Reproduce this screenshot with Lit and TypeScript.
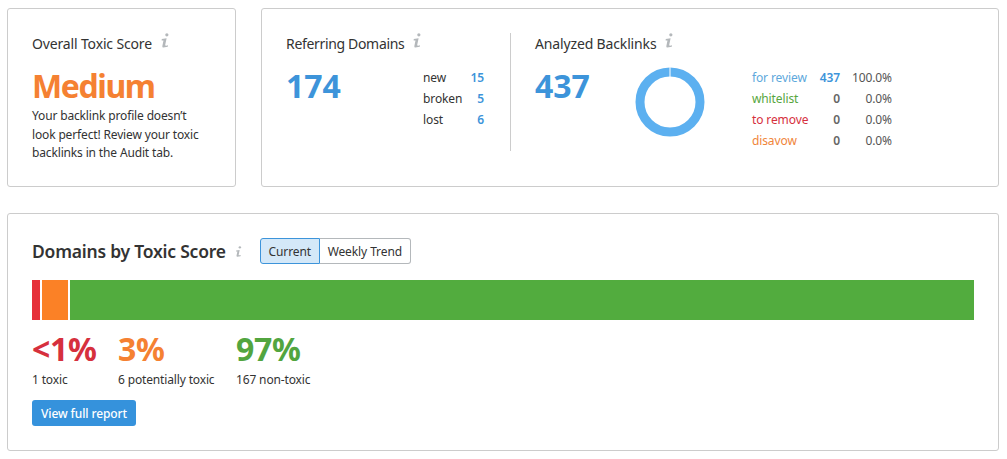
import { LitElement, html, css, svg } from 'lit';
import { customElement } from 'lit/decorators.js';

const info = (size: number) => html`
  <svg class="info" width=${size} height=${Math.round(size * 1.25)} viewBox="0 0 10 13" aria-hidden="true">
    ${svg`<circle cx="6.6" cy="1.6" r="1.4" fill="#b4b8bb"></circle>
    <path d="M2.2 5.2 L6.4 4.6 L5.2 10.2 Q5.1 11.1 6 11 L7.6 10.6 L7.4 12 L3.6 12.6 Q2.4 12.6 2.7 11.2 L3.7 6.6 L2.1 6.6 Z" fill="#b4b8bb"></path>`}
  </svg>`;

const legend = [
  { label: 'for review', cls: 'review', count: '437', pct: '100.0%', active: true },
  { label: 'whitelist', cls: 'white', count: '0', pct: '0.0%', active: false },
  { label: 'to remove', cls: 'remove', count: '0', pct: '0.0%', active: false },
  { label: 'disavow', cls: 'disavow', count: '0', pct: '0.0%', active: false },
];

const domains = [
  { label: 'new', value: '15' },
  { label: 'broken', value: '5' },
  { label: 'lost', value: '6' },
];

const stats = [
  { pct: '<1%', note: '1 toxic', cls: 'red', width: 86 },
  { pct: '3%', note: '6 potentially toxic', cls: 'orange', width: 118 },
  { pct: '97%', note: '167 non-toxic', cls: 'green', width: 100 },
];

@customElement('app-root')
export class AppRoot extends LitElement {
  static styles = css`
    :host {
      display: block;
      box-sizing: border-box;
      width: 1007px;
      height: 459px;
      padding: 8px 8px 0 7px;
      background: #fff;
      color: #333;
      font-family: 'Noto Sans', 'Open Sans', sans-serif;
      font-size: 12px;
      overflow: hidden;
    }

    .top {
      display: flex;
      gap: 25px;
      margin-bottom: 26px;
    }

    .card {
      box-sizing: border-box;
      background: #fff;
      border: 1px solid #ccc;
      border-radius: 3px;
    }

    .score {
      width: 229px;
      height: 179px;
      padding: 24px 24px 0;
    }

    .links {
      display: flex;
      width: 738px;
      height: 179px;
      padding: 24px 0 0 24px;
    }

    .title {
      display: flex;
      align-items: flex-start;
      gap: 7px;
      height: 22px;
      font-size: 14px;
      line-height: 22px;
      letter-spacing: -0.15px;
      white-space: nowrap;
    }

    .info {
      display: block;
    }

    .medium {
      margin-top: 9px;
      color: #f58132;
      font-size: 32px;
      font-weight: 700;
      line-height: 43px;
      letter-spacing: -1.4px;
    }

    .desc {
      margin: 0;
      font-size: 12px;
      line-height: 18.5px;
      letter-spacing: -0.15px;
      white-space: nowrap;
    }

    .referring {
      width: 224px;
      height: 118px;
      border-right: 1px solid #ccc;
      box-sizing: content-box;
    }

    .referring .title {
      letter-spacing: -0.33px;
    }

    .analyzed {
      flex: 1;
      padding-left: 24px;
    }

    .body {
      display: flex;
      margin-top: 9px;
    }

    .big {
      color: #3d94da;
      font-size: 32px;
      font-weight: 700;
      line-height: 43px;
    }

    .referring .big {
      width: 137px;
    }

    .domains {
      display: grid;
      grid-template-columns: 46px 15px;
      justify-content: start;
      margin-top: 3px;
      line-height: 21px;
      letter-spacing: -0.1px;
    }

    .domains b,
    .legend b {
      text-align: right;
      font-weight: 600;
    }

    .domains b {
      color: #3d94da;
    }

    .donut {
      display: block;
      margin: 3px 0 0 45px;
    }

    .legend {
      display: grid;
      grid-template-columns: 66px 22px 52px;
      margin: 3px 0 0 47px;
      line-height: 21px;
      letter-spacing: -0.1px;
      height: 84px;
    }

    .legend b {
      color: #666;
    }

    .legend b.on {
      color: #3d94da;
    }

    .legend span.pct {
      text-align: right;
      color: #555;
    }

    .review { color: #5da8dc; }
    .white { color: #57a63e; }
    .remove { color: #d6303d; }
    .disavow { color: #f0853a; }

    .toxic {
      height: 238px;
      padding: 24px 24px 0;
    }

    .head {
      display: flex;
      align-items: center;
      height: 26px;
    }

    .head h2 {
      margin: 0;
      font-size: 17.5px;
      font-weight: 600;
      line-height: 26px;
      letter-spacing: -0.22px;
      white-space: nowrap;
    }

    .head .info {
      margin-left: 8px;
    }

    .switch {
      display: flex;
      margin-left: 17px;
      height: 26px;
      font-size: 12px;
      letter-spacing: -0.1px;
    }

    .switch button {
      box-sizing: border-box;
      height: 26px;
      padding: 0;
      border: 1px solid #b4b8bb;
      background: #fff;
      color: #333;
      font: inherit;
      letter-spacing: inherit;
    }

    .switch .on {
      width: 60px;
      background: #d4e8f8;
      border-color: #3d94da;
      border-radius: 3px 0 0 3px;
    }

    .switch .off {
      width: 91px;
      border-left: 0;
      border-radius: 0 3px 3px 0;
    }

    .bar {
      display: flex;
      gap: 2px;
      height: 40px;
      width: 942px;
      margin-top: 16px;
    }

    .bar div:nth-child(1) { width: 8px; background: #e6303a; }
    .bar div:nth-child(2) { width: 26px; background: #fb8126; }
    .bar div:nth-child(3) { flex: 1; background: #52ac3e; }

    .stats {
      display: flex;
      margin-top: 9px;
    }

    .stat .pct {
      font-size: 32px;
      font-weight: 700;
      line-height: 40px;
      letter-spacing: -0.3px;
    }

    .stat .note {
      margin-top: 2px;
      line-height: 18px;
      letter-spacing: -0.15px;
      white-space: nowrap;
    }

    .red { color: #d6303d; }
    .orange { color: #f58132; }
    .green { color: #52a53f; }

    .report {
      display: block;
      width: 104px;
      height: 26px;
      margin-top: 11px;
      padding: 0;
      border: 0;
      border-radius: 3px;
      background: #3592dc;
      color: #fff;
      font: inherit;
      font-weight: 500;
      letter-spacing: -0.1px;
    }
  `;

  render() {
    return html`
      <div class="top">
        <section class="card score">
          <div class="title">Overall Toxic Score ${info(12)}</div>
          <div class="medium">Medium</div>
          <p class="desc">Your backlink profile doesn’t<br />look perfect! Review your toxic<br />backlinks in the Audit tab.</p>
        </section>
        <section class="card links">
          <div class="referring">
            <div class="title">Referring Domains ${info(12)}</div>
            <div class="body">
              <div class="big">174</div>
              <div class="domains">
                ${domains.map((d) => html`<span>${d.label}</span><b>${d.value}</b>`)}
              </div>
            </div>
          </div>
          <div class="analyzed">
            <div class="title">Analyzed Backlinks ${info(12)}</div>
            <div class="body">
              <div class="big">437</div>
              <svg class="donut" width="70" height="70" viewBox="0 0 70 70" aria-hidden="true">
                <circle cx="35" cy="35" r="30" fill="none" stroke="#5cb0f0" stroke-width="9"></circle>
                <rect x="34.5" y="0" width="1" height="10" fill="#fff"></rect>
              </svg>
              <div class="legend">
                ${legend.map((l) => html`
                  <span class=${l.cls}>${l.label}</span>
                  <b class=${l.active ? 'on' : ''}>${l.count}</b>
                  <span class="pct">${l.pct}</span>
                `)}
              </div>
            </div>
          </div>
        </section>
      </div>
      <section class="card toxic">
        <div class="head">
          <h2>Domains by Toxic Score</h2>
          ${info(9)}
          <div class="switch">
            <button class="on">Current</button>
            <button class="off">Weekly Trend</button>
          </div>
        </div>
        <div class="bar"><div></div><div></div><div></div></div>
        <div class="stats">
          ${stats.map((s) => html`
            <div class="stat" style="width: ${s.width}px">
              <div class="pct ${s.cls}">${s.pct}</div>
              <div class="note">${s.note}</div>
            </div>
          `)}
        </div>
        <button class="report">View full report</button>
      </section>
    `;
  }
}
